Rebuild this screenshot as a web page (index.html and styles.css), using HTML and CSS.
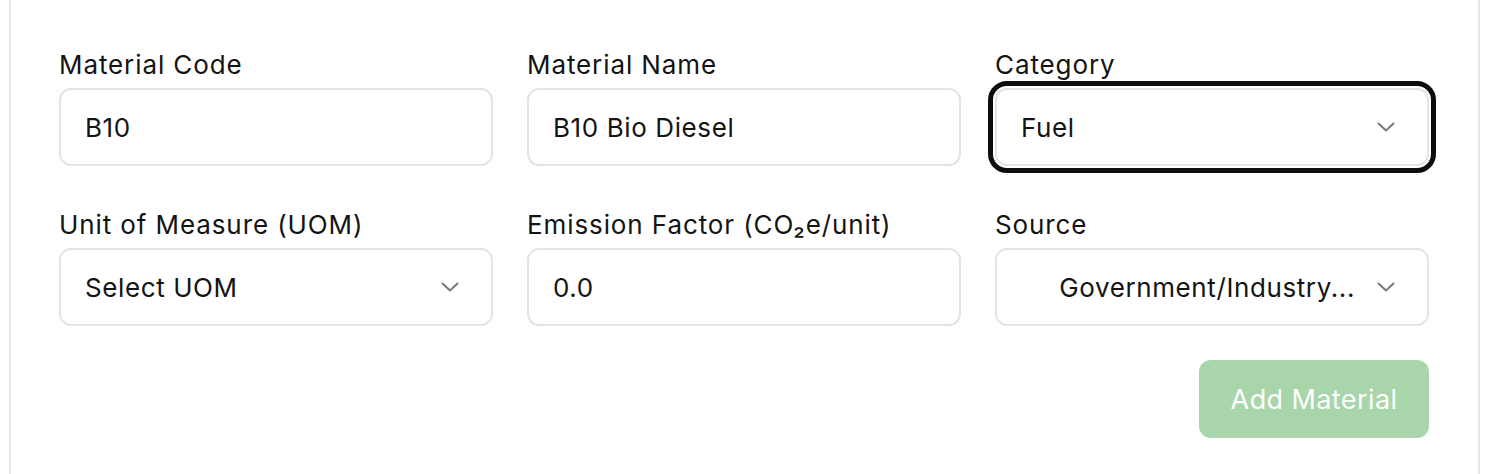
FILE: index.html
```html
<!DOCTYPE html>
<html>
<head>
<meta charset="utf-8">
<link rel="stylesheet" href="styles.css">
</head>
<body>
<div class="panel">
  <div class="grid">
    <div class="field">
      <label class="label">Material Code</label>
      <div class="control"><span class="value">B10</span></div>
    </div>
    <div class="field">
      <label class="label">Material Name</label>
      <div class="control"><span class="value">B10 Bio Diesel</span></div>
    </div>
    <div class="field">
      <label class="label">Category</label>
      <div class="control select focused"><span class="value">Fuel</span>
        <svg class="chev" width="18" height="10" viewBox="0 0 18 10"><path d="M1.5 1.5 L9 8.5 L16.5 1.5" fill="none" stroke="#7a7a7a" stroke-width="2" stroke-linecap="round" stroke-linejoin="round"/></svg>
      </div>
    </div>
    <div class="field">
      <label class="label">Unit of Measure (UOM)</label>
      <div class="control select"><span class="value">Select UOM</span>
        <svg class="chev" width="18" height="10" viewBox="0 0 18 10"><path d="M1.5 1.5 L9 8.5 L16.5 1.5" fill="none" stroke="#7a7a7a" stroke-width="2" stroke-linecap="round" stroke-linejoin="round"/></svg>
      </div>
    </div>
    <div class="field">
      <label class="label">Emission Factor (CO₂e/unit)</label>
      <div class="control"><span class="value">0.0</span></div>
    </div>
    <div class="field">
      <label class="label">Source</label>
      <div class="control select right"><span class="value">Government/Industry...</span>
        <svg class="chev" width="18" height="10" viewBox="0 0 18 10"><path d="M1.5 1.5 L9 8.5 L16.5 1.5" fill="none" stroke="#7a7a7a" stroke-width="2" stroke-linecap="round" stroke-linejoin="round"/></svg>
      </div>
    </div>
  </div>
  <div class="actions">
    <button class="btn">Add Material</button>
  </div>
</div>
</body>
</html>
```
FILE: styles.css
```css
html, body {
  margin: 0;
  padding: 0;
  background: #ffffff;
  font-family: Inter, "Noto Sans", "Liberation Sans", sans-serif;
  color: #161616;
}
.panel {
  margin-left: 9px;
  border-left: 2px solid #e6e6e6;
  border-right: 2px solid #e6e6e6;
  padding: 49px 49px 40px 48px;
  box-sizing: border-box;
  width: 1471px;
  height: 474px;
}
.grid {
  display: grid;
  grid-template-columns: 434px 434px 434px;
  column-gap: 34px;
  row-gap: 43px;
}
.field {
  display: flex;
  flex-direction: column;
  gap: 7px;
}
.label {
  font-size: 26px;
  line-height: 32px;
  font-weight: 400;
  letter-spacing: 0.9px;
  color: #141414;
}
.control {
  height: 78px;
  box-sizing: border-box;
  border: 2px solid #e4e4e4;
  border-radius: 12px;
  display: flex;
  align-items: center;
  padding: 0 32px 0 24px;
  font-size: 26px;
  letter-spacing: 0.6px;
  color: #141414;
}
.control .value {
  flex: 1;
  white-space: nowrap;
}
.control.right .value {
  text-align: right;
  padding-right: 22px;
}
.focused {
  outline: 5px solid #0d0d0d;
  outline-offset: 2px;
}
.chev {
  flex: none;
}
.actions {
  display: flex;
  justify-content: flex-end;
  margin-top: 34px;
}
.btn {
  width: 230px;
  height: 78px;
  border: none;
  border-radius: 12px;
  background: #a8d5aa;
  color: #ffffff;
  font-family: Inter, "Noto Sans", "Liberation Sans", sans-serif;
  font-size: 27px;
  letter-spacing: 0.4px;
  font-weight: 400;
}
```
